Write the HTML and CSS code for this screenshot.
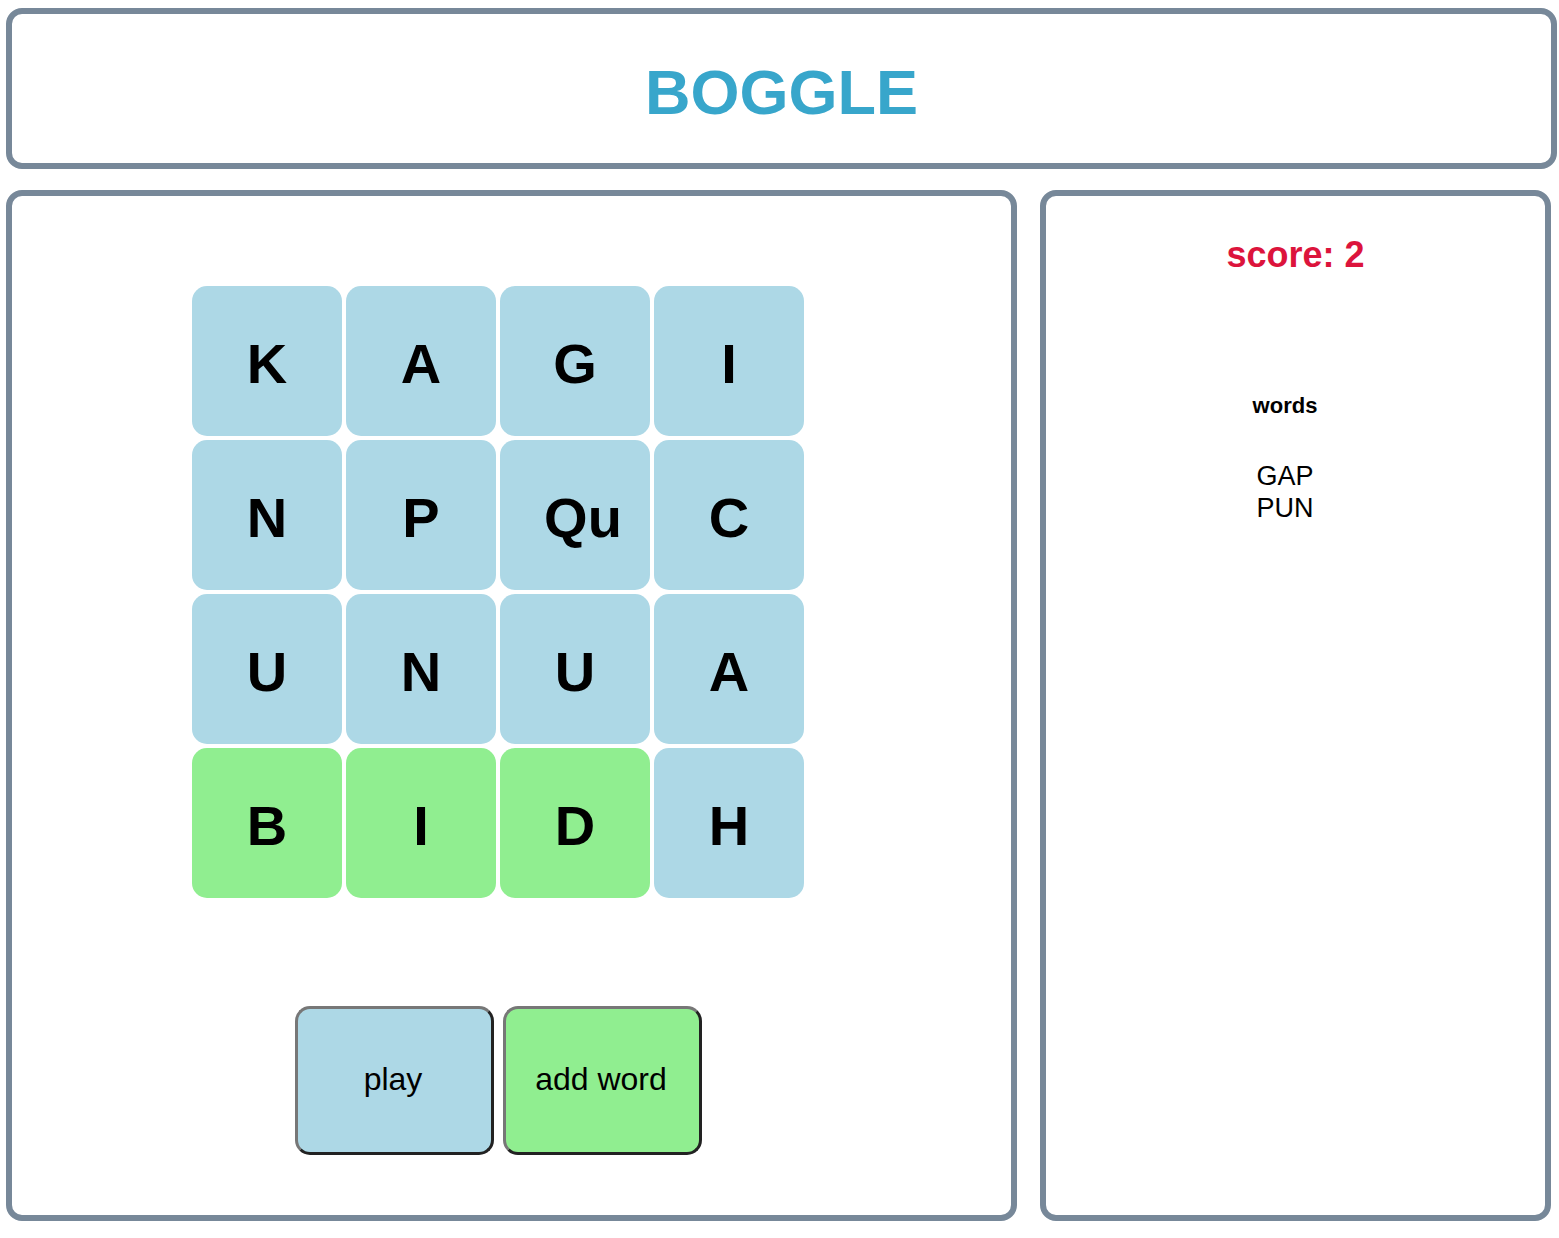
FILE: index.html
```html
<!DOCTYPE html>
<html lang="en">
<head>
    <meta charset="UTF-8">
    <meta name="viewport" content="width=device-width, initial-scale=1.0">
    <title>Boggle</title>
    <link rel="stylesheet" href="styles.css">
</head>
<body>
    <header class="title-box">
        <h1>BOGGLE</h1>
    </header>
    <div class="main">
        <div class="board-box">
            <div class="board">
                <div class="tile">K</div>
                <div class="tile">A</div>
                <div class="tile">G</div>
                <div class="tile">I</div>
                <div class="tile">N</div>
                <div class="tile">P</div>
                <div class="tile tile-qu">Qu</div>
                <div class="tile">C</div>
                <div class="tile">U</div>
                <div class="tile">N</div>
                <div class="tile">U</div>
                <div class="tile">A</div>
                <div class="tile selected">B</div>
                <div class="tile selected">I</div>
                <div class="tile selected">D</div>
                <div class="tile">H</div>
            </div>
            <div class="controls">
                <button class="button play">play</button>
                <button class="button add">add word</button>
            </div>
        </div>
        <div class="side-box">
            <h2 class="score">score: 2</h2>
            <div class="words">
                <h3>words</h3>
                <ul class="word-list">
                    <li>GAP</li>
                    <li>PUN</li>
                </ul>
            </div>
        </div>
    </div>
</body>
</html>
```

FILE: styles.css
```css
body {
    font-family: "Liberation Sans", Arial, sans-serif;
    background-color: white;
    margin: 0;
    padding: 8px 2px 0 6px;
}

.title-box {
    box-sizing: border-box;
    height: 161px;
    border: 6px solid #778899;
    border-radius: 16px;
    padding-top: 42px;
    text-align: center;
}

.title-box h1 {
    margin: 0;
    font-size: 63px;
    font-weight: bold;
    color: #38a6cb;
}

.main {
    display: flex;
    gap: 23px;
    margin-top: 21px;
}

.board-box,
.side-box {
    box-sizing: border-box;
    height: 1031px;
    border: 6px solid #778899;
    border-radius: 16px;
}

.board-box {
    width: 1011px;
    padding: 90px 27px 0 0;
    display: flex;
    flex-direction: column;
    align-items: center;
}

.board {
    display: grid;
    grid-template-columns: repeat(4, 150px);
    grid-auto-rows: 150px;
    gap: 4px;
}

.tile {
    display: flex;
    align-items: center;
    justify-content: center;
    padding-top: 4px;
    box-sizing: border-box;
    background-color: #add8e6;
    border-radius: 15px;
    font-size: 56px;
    font-weight: bold;
    color: black;
}

.tile-qu {
    padding-left: 16px;
}

.tile.selected {
    background-color: #90ee90;
}

.controls {
    display: flex;
    gap: 9px;
    margin-top: 108px;
}

.button {
    box-sizing: border-box;
    width: 199px;
    height: 149px;
    border: 3px solid;
    border-color: #777 #222 #222 #777;
    border-radius: 15px;
    font-family: "Liberation Sans", Arial, sans-serif;
    font-size: 32px;
    color: black;
    cursor: pointer;
    padding: 0 2px 2px 0;
}

.button.play {
    background-color: #add8e6;
}

.button.add {
    background-color: #90ee90;
}

.side-box {
    width: 511px;
    text-align: center;
}

.score {
    margin: 38px 0 0;
    font-size: 36px;
    font-weight: bold;
    color: #dc143c;
}

.words {
    padding-right: 21px;
}

.words h3 {
    margin: 117px 0 0;
    font-size: 22px;
    font-weight: bold;
}

.word-list {
    list-style: none;
    margin: 41px 0 0;
    padding: 0;
    font-size: 27px;
    line-height: 32px;
}
```
